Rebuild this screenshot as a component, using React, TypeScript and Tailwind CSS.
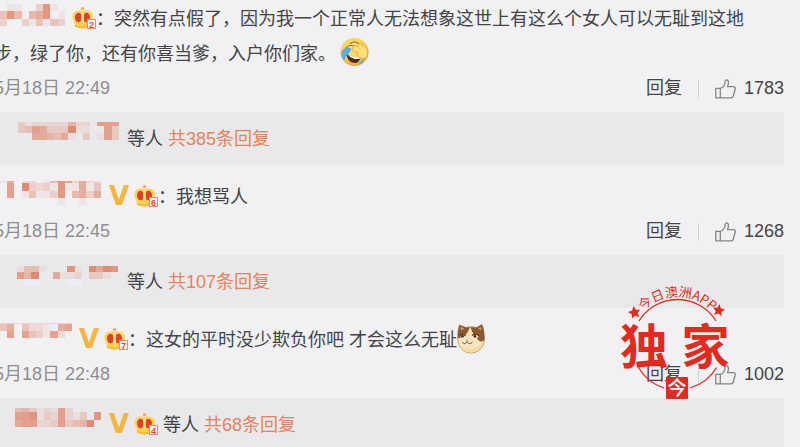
import type { ReactNode } from "react";

type MosaicRow = [height: number, shades: string];

/** Pixelated user name: each digit is the strength of one 7px block. */
function Mosaic({ x = 0, y, width, rows, className = "" }: { x?: number; y: number; width: number; rows: MosaicRow[]; className?: string }) {
  const tops = rows.map((_, i) => y + rows.slice(0, i).reduce((sum, [h]) => sum + h, 0));
  return (
    <svg width={width} height="35" className={`inline-block shrink-0 align-top ${className}`} shapeRendering="crispEdges" aria-hidden="true">
      {rows.map(([h, shades], r) =>
        [...shades].map((shade, c) =>
          shade === "0" ? null : (
            <rect
              key={`${r}-${c}`}
              x={x + c * 7.2}
              y={tops[r]}
              width="7.2"
              height={h}
              fill={shade === "b" ? "#e9eef7" : "#de7a5c"}
              fillOpacity={shade === "b" ? 1 : Number(shade) * 0.095}
            />
          ),
        ),
      )}
    </svg>
  );
}

function Verified() {
  return (
    <svg width="22" height="35" className="inline-block shrink-0 align-top" aria-hidden="true">
      <text x="11" y="25" textAnchor="middle" fontSize="26" fill="#f6b53c" className="font-['DejaVu_Sans',sans-serif] font-bold">
        V
      </text>
    </svg>
  );
}

function Crown({ level }: { level: number }) {
  return (
    <svg width="24" height="35" viewBox="0 1 24 35" className="inline-block shrink-0 align-top" aria-hidden="true">
      <circle cx="10.500" cy="7.500" r="1.600" fill="#f0a35a" />
      <path d="M3 22C1 20 0 16.500 0.300 14.500C1 10.500 5 8.500 10.500 10C16 8.500 20.500 10.500 21 14.500C21.200 17 20 20 18 22Z" fill="#fbd75c" />
      <path d="M2.500 20.500H18.500L18.200 25.500C14 28 7 28 2.800 25.500Z" fill="#f9d34e" />
      <path d="M3 24C8 25.500 13 25.500 18 24V25.800C14 28 7 28 3 25.800Z" fill="#f3bd3f" />
      <ellipse cx="6.500" cy="16.500" rx="3.500" ry="4.800" fill="#e2402f" />
      <ellipse cx="14.500" cy="16.500" rx="3.500" ry="4.800" fill="#e2402f" />
      <path d="M9.200 21.500V13C9.200 11.300 11.800 11.300 11.800 13V21.500Z" fill="#fde27c" />
      <rect x="15.500" y="18.500" width="8" height="9" fill="#fff6f3" stroke="#e98a7b" />
      <text x="19.500" y="26.500" textAnchor="middle" fontSize="9" fill="#dc4a3a" className="font-['Liberation_Sans',sans-serif] font-bold">
        {level}
      </text>
    </svg>
  );
}

function LaughCry() {
  return (
    <svg width="30" height="35" viewBox="0 0 30 35" className="ml-1 inline-block align-top" role="img" aria-label="允悲">
      <defs>
        <radialGradient id="face" cx="45%" cy="35%" r="65%">
          <stop offset="0" stopColor="#ffe680" />
          <stop offset="0.700" stopColor="#fbcf4c" />
          <stop offset="1" stopColor="#e9a23a" />
        </radialGradient>
      </defs>
      <circle cx="14.500" cy="15" r="14" fill="url(#face)" />
      <path d="M10.500 6.500C13 4.500 16 4.500 18.500 6.500M6 11C8 8 12 8 15 9.500" fill="none" stroke="#a8702a" strokeWidth="1.200" strokeLinecap="round" />
      <path d="M7 16C10 20 15 21.500 20.500 20.500C20 25 16 27 12 25.500C8 24 6.500 20 7 16Z" fill="#5c2510" />
      <path d="M7.500 16.500C10 19.500 15 20.500 20 20L19.500 22C14 22.500 9.500 21 7.500 16.500Z" fill="#fff" />
      <path d="M11.500 11.500C6 8.500 2.500 12.500 1.500 15.500C0.800 19 2 22 4.500 23.500C5.500 18 10 17 11.500 11.500Z" fill="#58aee9" />
      <path d="M18.500 25.500C20.500 25 22 23.500 23 22C24.500 22.500 23.500 26 19.500 27.500Z" fill="#58aee9" />
      <path d="M12.500 11.500C12.800 9 16 8.500 18 9.500C18.500 6 22 5.500 24 8.500C28 12 28.500 16 27 19.500C25 22.500 21 22 18.500 19.500C17 18 17 16.500 17.500 15C15.500 15.500 12 14 12.500 11.500Z" fill="#ffe27a" stroke="#e0a03c" strokeWidth="0.900" />
      <path d="M18 9.500L21 13M21 7.500L24 11.500" stroke="#e6ae45" strokeWidth="0.800" />
    </svg>
  );
}

function CatFace() {
  return (
    <svg width="28" height="35" viewBox="0 1 28 35" className="inline-block align-top" role="img" aria-label="doge猫">
      <path d="M2.500 3L9 5.500C12 4.500 17 4.500 19.500 5.500L25 2.500C26.500 6 27.500 12 27.500 17C27 26 21 31 14 31C7 31 1 26 0.700 17C0.500 12 1 7 2.500 3Z" fill="#f6e3c0" stroke="#b68a63" strokeWidth="0.800" />
      <path d="M2.500 3L9 5.500L13 5C11.500 9 9 13 6.500 15.500L0.900 16C0.600 11 1.200 7 2.500 3Z" fill="#8d572d" />
      <path d="M13.500 5L19.500 5.500L25 2.500C27 7 27.500 13 27.300 18C24.500 21 21 19 19.500 15.500C17 13.500 14.500 9 13.500 5Z" fill="#8d572d" />
      <path d="M3.500 4.800L7.500 6.500L4 8.500ZM24 4.800L21 6.500L24.500 8.500Z" fill="#d19d7e" />
      <path d="M2 22C6 28 21 29 26 21C25 27 20 30.500 14 30.500C8 30.500 3.500 27.500 2 22Z" fill="#f4db96" />
      <ellipse cx="5.800" cy="14" rx="2.500" ry="1.800" fill="#efe8c8" />
      <ellipse cx="18.500" cy="14" rx="3.200" ry="2" fill="#efe8c8" />
      <path d="M3 13.500C5 12 7 12.500 8.500 14M15 13.500C17 11.500 20.500 12 22 14" fill="none" stroke="#4b2b18" strokeWidth="1.100" />
      <circle cx="5.500" cy="14.300" r="1.300" fill="#4b2b18" />
      <circle cx="18" cy="14.300" r="1.400" fill="#4b2b18" />
      <path d="M8.500 17.500H11.500L10 19.300Z" fill="#ea8f86" />
      <path d="M5.500 20.500C7 22.500 9.500 22 10 19.500C10.800 22 13.500 22.500 15.500 20" fill="none" stroke="#82502e" strokeWidth="1" strokeLinecap="round" />
    </svg>
  );
}

function ThumbIcon() {
  return (
    <svg width="21" height="20" viewBox="0 0 21 20" fill="none" stroke="#858585" strokeWidth="1.300" strokeLinejoin="round" aria-hidden="true">
      <path d="M0.800 9.300H5.300V18.800H0.800Z" />
      <path d="M5.300 9.300C8.500 8.500 10 5.500 10.200 2.300C10.500 0.300 13.500 0.500 13.500 3.300C13.500 5.200 13 6.500 12.500 7.700H18.500C20 7.700 20.500 8.800 20.200 10L18.300 17C18 18.300 17.500 18.800 16.200 18.800H5.300" />
    </svg>
  );
}

function Meta({ time, likes }: { time: string; likes: number }) {
  return (
    <div className="flex h-[33px] items-center justify-between">
      <time className="text-[#8e8e90]">{time}</time>
      <div className="flex items-center">
        <button type="button">回复</button>
        <span className="mx-4 h-[18px] w-px bg-[#d3d3d5]" />
        <button type="button" className="flex items-center gap-2" aria-label={`赞 ${likes}`}>
          <ThumbIcon />
          <span>{likes}</span>
        </button>
      </div>
    </div>
  );
}

function Replies({ name, count }: { name: ReactNode; count: number }) {
  return (
    <div className="mt-[7px] flex h-[53px] items-center bg-[#e9e9eb] pt-0.5">
      {name}
      <span>等人</span>
      <a href="#replies" className="ml-[5px] text-[#e5825f]">
        共{count}条回复
      </a>
    </div>
  );
}

function Stamp() {
  return (
    <svg width="114" height="120" viewBox="617 282 114 120" className="pointer-events-none absolute top-[282px] right-[69px]" fill="#e22a20" aria-label="今日澳洲APP 独家">
      <defs>
        <path id="rim" d="M629.500 344.700A48 48 0 0 1 725.500 344.700" />
      </defs>
      <g fill="none" stroke="#e22a20" strokeWidth="1.300">
        <path d="M639 321A45.200 45.200 0 0 1 716 321" />
        <path d="M638.500 367.500A45.200 45.200 0 0 0 664 388" />
        <path d="M690 388A45.200 45.200 0 0 0 716.500 367.500" />
      </g>
      <text fontSize="13" textAnchor="middle" className="font-['Noto_Sans_CJK_SC',sans-serif]">
        <textPath href="#rim" startOffset="50%">
          今日澳洲APP
        </textPath>
      </text>
      <path d="M633.500 306L635.800 309.700L640 309.500L637.600 312.900L639.500 317L635.200 315.700L632 318.500L631.700 314.200L628 312L632.200 310.500Z" />
      <path d="M719.500 304L720.800 308.200L725 309.500L721.400 312L721.600 316.200L718.200 313.500L714.200 315L715.700 310.900L713 307.500L717.400 307.700Z" />
      <text x="644" y="364" fontSize="48" textAnchor="middle" className="font-['Noto_Sans_CJK_SC',sans-serif] font-bold">
        独
      </text>
      <text x="705.500" y="364" fontSize="48" textAnchor="middle" className="font-['Noto_Sans_CJK_SC',sans-serif] font-bold">
        家
      </text>
      <rect x="666" y="377" width="22" height="22" rx="1" />
      <text x="677" y="395" fontSize="19" textAnchor="middle" fill="#fff" className="font-['Noto_Sans_CJK_SC',sans-serif] font-medium">
        今
      </text>
    </svg>
  );
}

export default function App() {
  return (
    <main className="relative h-screen overflow-hidden bg-[#f1f1f4] font-['Liberation_Sans','Noto_Sans_CJK_SC',sans-serif] text-[18px] leading-[35px] text-[#444446]">
      <div className="-ml-1.5 pr-4">
        <article className="pt-0.5">
          <p className="pr-6">
            <Mosaic x={6} y={2} width={72} rows={[[7, "011003810"], [8, "485056801"], [7, "300314143"]]} className="mr-1.5" />
            <Crown level={2} />
            ：突然有点假了，因为我一个正常人无法想象这世上有这么个女人可以无耻到这地步，绿了你，还有你喜当爹，入户你们家。
            <LaughCry />
          </p>
          <Meta time="5月18日 22:49" likes={1783} />
          <Replies
            name={<Mosaic x={24} y={0} width={125} rows={[[4, "31222225220777"], [7, "34763339110073"], [7, "00665461030173"]]} className="mr-2" />}
            count={385}
          />
        </article>

        <article className="pt-[15px]">
          <p className="flex">
            <Mosaic x={6} y={1} width={108} rows={[[2, "16022015873622"], [8, "07093231811614"], [7, "07014113805636"], [7, "00000000100100"]]} className="mr-1.5" />
            <Verified />
            <span className="w-1" />
            <Crown level={6} />
            ：我想骂人
          </p>
          <Meta time="5月18日 22:45" likes={1268} />
          <Replies
            name={<Mosaic x={23} y={1} width={125} rows={[[6, "14410008109698"], [7, "75900611203310"], [7, "0bb0000bb00000"]]} className="mr-2" />}
            count={107}
          />
        </article>

        <article className="pt-[15px]">
          <p className="flex">
            <Mosaic x={6} y={0} width={78} rows={[[1, "2323322333"], [7, "4604221b67"], [7, "0707431720"]]} className="mr-1.5" />
            <Verified />
            <span className="w-1" />
            <Crown level={7} />
            ：这女的平时没少欺负你吧 才会这么无耻
            <CatFace />
          </p>
          <Meta time="5月18日 22:48" likes={1002} />
          <Replies
            name={
              <>
                <Mosaic x={21} y={0} width={108} rows={[[4, "453121720000"], [8, "778132721308"], [7, "677223734590"]]} className="mr-1.5" />
                <Verified />
                <span className="w-1" />
                <Crown level={4} />
                <span className="w-[5px]" />
              </>
            }
            count={68}
          />
        </article>
      </div>
      <Stamp />
    </main>
  );
}
